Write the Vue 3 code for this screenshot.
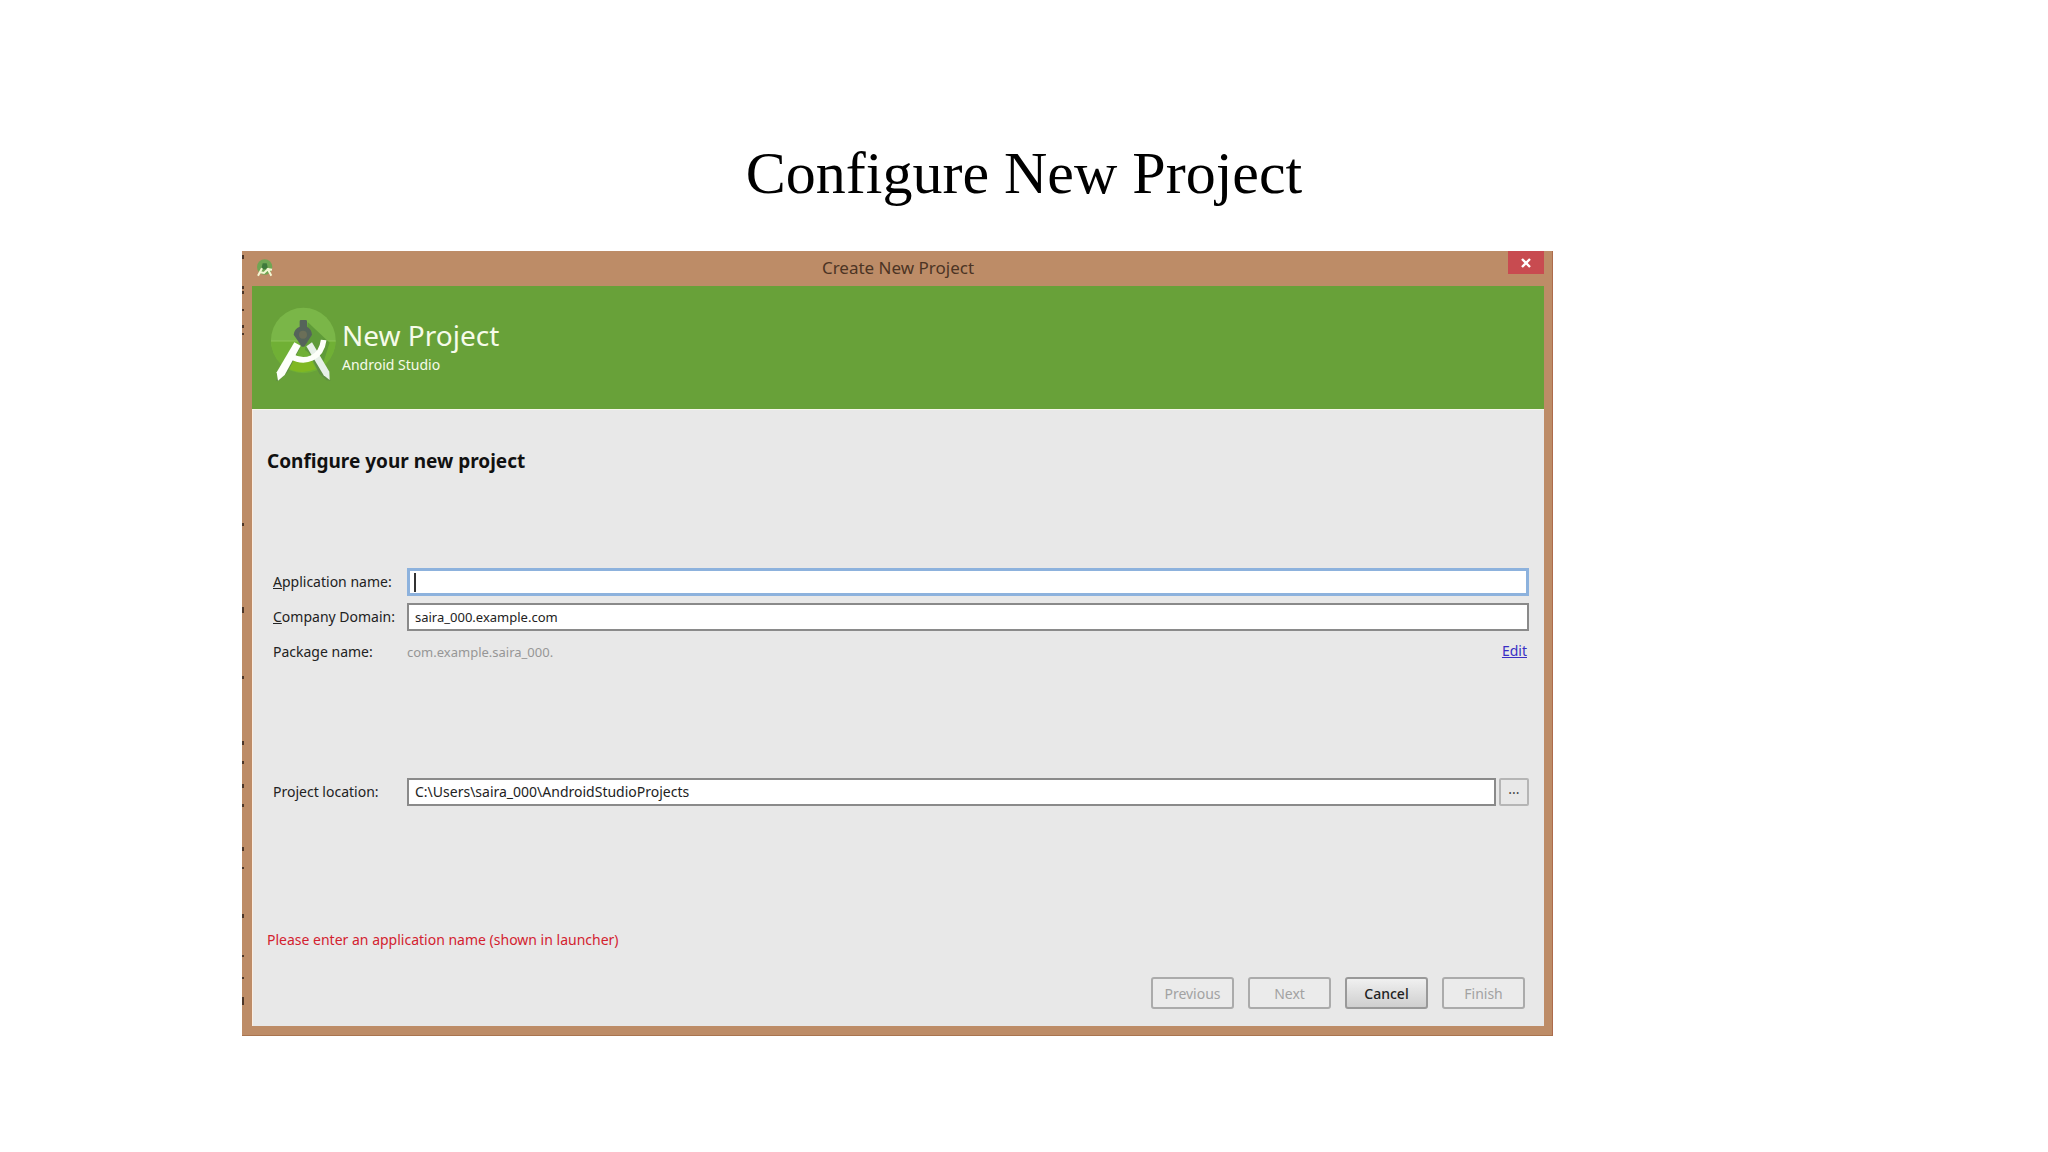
<script setup>
import { ref } from 'vue'

const form = ref({
  appName: '',
  domain: 'saira_000.example.com',
  location: 'C:\\Users\\saira_000\\AndroidStudioProjects'
})

const buttons = [
  { id: 1, text: 'Previous', disabled: true },
  { id: 2, text: 'Next', disabled: true },
  { id: 3, text: 'Cancel', disabled: false },
  { id: 4, text: 'Finish', disabled: true }
]

// dark specks along the left window edge: [y, height]
const specks = [
  [4, 4], [35, 3], [40, 3], [58, 2], [74, 3], [82, 2],
  [272, 3], [356, 6], [425, 3], [490, 4], [510, 3], [533, 4], [553, 3],
  [596, 4], [616, 2], [663, 4], [704, 2], [726, 2], [746, 8]
]
</script>

<template>
  <main class="slide">
    <h1 class="slide_title">Configure New Project</h1>

    <section class="window">
      <svg class="specks" width="3" height="785" aria-hidden="true">
        <rect v-for="s in specks" :key="s[0]" x="0" :y="s[0]" width="2" :height="s[1]" fill="#4d3628" />
      </svg>

      <header class="titlebar">
        <svg class="titlebar_icon" viewBox="0 0 54 54" aria-hidden="true">
          <circle cx="26" cy="24" r="23" fill="#6fa653" />
          <path d="M20 13h12l3 12-5 6h-8l-5-6z" fill="#3f7a3c" />
          <path d="M18 28L6 50M34 28l12 22M14 40l10 2 12-12 12 2" fill="none" stroke="#f4f7d4" stroke-width="6" />
        </svg>
        <span class="titlebar_text">Create New Project</span>
        <button class="close_btn" aria-label="Close">
          <svg width="12" height="10" viewBox="0 0 12 10">
            <path d="M2 1l8 8M10 1l-8 8" stroke="#fff" stroke-width="2.4" />
          </svg>
        </button>
      </header>

      <div class="banner">
        <svg class="logo" viewBox="120 198 204 228" aria-hidden="true">
          <circle cx="220" cy="300" r="97" fill="#7ab648" />
          <path d="M123 303a97 97 0 0 0 194 0z" fill="#70b035" />
          <path d="M123 303h194" stroke="#8cc456" stroke-width="3" />
          <path d="M233 246l66 62-20 62-54-40z" fill="#5f9b39" />
          <path d="M190 352l-18 32q40 22 86 3l-14-27z" fill="#80b822" />
          <path d="M197 318l-60 106 10-3 24-22 40-76zM240 318l62 104-12-1-22-20-36-72z" fill="#5f8f42" />
          <path d="M193 307l19 10-48 88-20 17-4-25z" fill="#fdfffa" />
          <path d="M229 319l17-12 52 88 1 25-18-14z" fill="#e7f0e8" />
          <path d="M182 349c44 24 92 6 99-49" fill="none" stroke="#fdfffa" stroke-width="17" />
          <path d="M209 260v-16q0-4 4-4h14q4 0 4 4v16q14 8 15 24l-14 22-9 14h-8l-9-14-15-22q2-18 18-24z" fill="#55645a" />
          <circle cx="219" cy="284" r="12" fill="#6b6f58" />
        </svg>
        <div class="banner_text">
          <h2>New Project</h2>
          <p>Android Studio</p>
        </div>
      </div>

      <form class="content" @submit.prevent>
        <h3>Configure your new project</h3>

        <div class="fields">
          <label for="app-name"><u>A</u>pplication name:</label>
          <div class="focus_box">
            <input id="app-name" v-model="form.appName" type="text" />
            <span class="caret"></span>
          </div>

          <label for="domain"><u>C</u>ompany Domain:</label>
          <input id="domain" v-model="form.domain" class="small" type="text" />

          <span>Package name:</span>
          <div class="package">
            <span class="small">com.example.saira_000.</span>
            <a href="#">Edit</a>
          </div>
        </div>

        <div class="fields location">
          <label for="location">Project location:</label>
          <div class="location_row">
            <input id="location" v-model="form.location" type="text" />
            <button type="button" class="browse_btn" aria-label="Browse">...</button>
          </div>
        </div>

        <p class="error">Please enter an application name (shown in launcher)</p>

        <div class="actions">
          <button v-for="b in buttons" :key="b.id" type="button" :disabled="b.disabled">{{ b.text }}</button>
        </div>
      </form>
    </section>
  </main>
</template>

<style>
body {
  margin: 0;
  background: #fff;
}
</style>

<style scoped>
.slide {
  display: grid;
  grid-template-columns: 242fr 1311fr 495fr;
  padding-bottom: 116px;
}

.slide_title {
  grid-column: 1 / -1;
  margin: 139px 0 44px;
  font: 400 60px/68px 'Liberation Serif', serif;
  text-align: center;
  color: #000;
}

.window {
  grid-column: 2;
  position: relative;
  box-sizing: border-box;
  padding: 0 8px 9px 10px;
  background: #bd8c67;
  border-right: 1px solid #ad6b4c;
  border-bottom: 1px solid #a9744f;
  font-family: 'Noto Sans', 'Open Sans', sans-serif;
  font-size: 14px;
  color: #222;
}

.specks {
  position: absolute;
  left: 0;
  top: 0;
}

.titlebar {
  display: grid;
  grid-template-columns: 36px 1fr 36px;
  height: 35px;
}

.titlebar_icon {
  width: 18px;
  height: 18px;
  margin: 8px 0 0 4px;
}

.titlebar_text {
  font-size: 17px;
  line-height: 34px;
  text-align: center;
  color: #4c3424;
}

.close_btn {
  display: flex;
  align-items: center;
  justify-content: center;
  height: 23px;
  padding: 0;
  border: none;
  background: #c84b50;
}

.banner {
  display: flex;
  gap: 4px;
  height: 123px;
  padding: 20px 18px 0;
  box-sizing: border-box;
  background: #68a139;
  color: #f6fbe9;
}

.logo {
  width: 68px;
  height: 76px;
}

.banner_text h2 {
  margin: 9px 0 0;
  font-size: 28px;
  line-height: 40px;
  font-weight: 400;
}

.banner_text p {
  margin: 0;
  line-height: 20px;
}

.content {
  padding: 38px 15px 17px 14px;
  background: #e8e8e8;
  border-top: 1px solid #f6f6ea;
  border-left: 1px solid #fbeee2;
}

h3 {
  margin: 0;
  font-size: 19px;
  line-height: 26px;
  color: #111;
}

.fields {
  display: grid;
  grid-template-columns: 134px 1fr;
  row-gap: 7px;
  align-items: center;
  margin: 94px 0 0 6px;
  line-height: 28px;
}

.location {
  margin-top: 112px;
}

input {
  box-sizing: border-box;
  width: 100%;
  height: 28px;
  padding: 0 6px;
  border: 2px solid #8a8a8a;
  background: #fff;
  font: inherit;
  color: #222;
  outline: none;
}

.small {
  font-size: 13px;
}

.focus_box {
  position: relative;
  display: flex;
}

.focus_box input {
  border: 3px solid #8db2dd;
}

.caret {
  position: absolute;
  left: 7px;
  top: 5px;
  width: 2px;
  height: 19px;
  background: #333;
}

.package {
  display: flex;
  justify-content: space-between;
  padding-right: 2px;
  color: #969696;
}

.package a {
  line-height: 26px;
  color: #3a2fc4;
}

.location_row {
  display: flex;
  gap: 3px;
}

.browse_btn {
  flex: 0 0 30px;
  padding: 0 0 6px;
  border: 2px solid #b5b5b5;
  border-radius: 2px;
  background: #e8e8e8;
  font: inherit;
  line-height: 18px;
  color: #444;
}

.error {
  margin: 124px 0 0;
  line-height: 20px;
  color: #d3222f;
}

.actions {
  display: flex;
  justify-content: flex-end;
  gap: 14px;
  margin: 27px 4px 0 0;
}

.actions button {
  width: 83px;
  height: 32px;
  padding: 0;
  border: 2px solid #999;
  border-radius: 3px;
  background: linear-gradient(#f0f0f0, #cfcfcf);
  font: inherit;
  font-weight: 500;
  color: #222;
}

.actions button:disabled {
  border-color: #ababab;
  background: #ebebeb;
  font-weight: 400;
  color: #a2a2a2;
}
</style>
